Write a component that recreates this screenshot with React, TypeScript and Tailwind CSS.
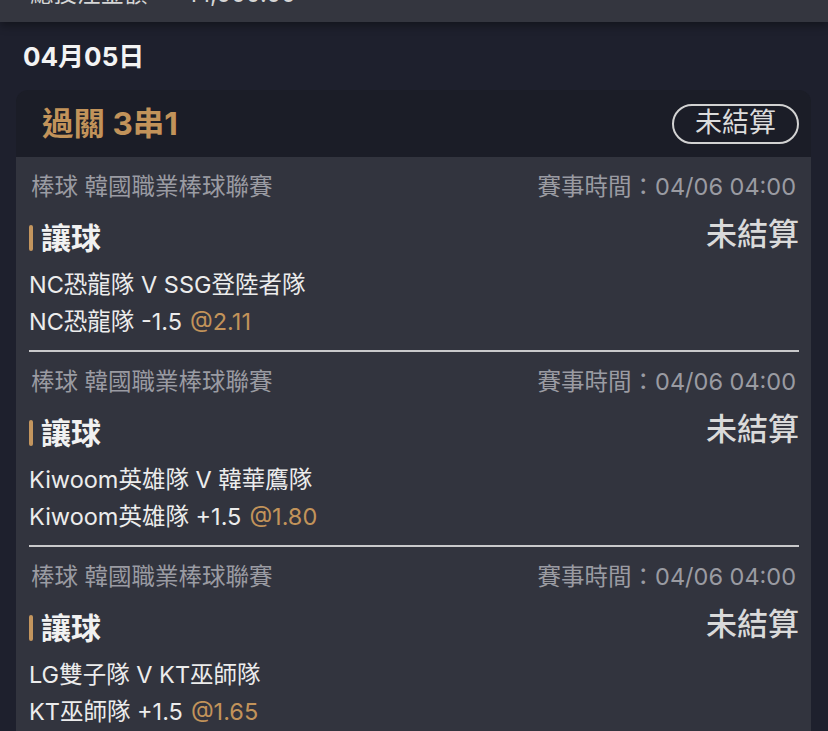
import React from "react";

type Bet = {
  league: string;
  time: string;
  market: string;
  status: string;
  match: string;
  pick: string;
  odds: string;
};

const bets: Bet[] = [
  {
    league: "棒球 韓國職業棒球聯賽",
    time: "賽事時間：04/06 04:00",
    market: "讓球",
    status: "未結算",
    match: "NC恐龍隊 V SSG登陸者隊",
    pick: "NC恐龍隊 -1.5",
    odds: "@2.11",
  },
  {
    league: "棒球 韓國職業棒球聯賽",
    time: "賽事時間：04/06 04:00",
    market: "讓球",
    status: "未結算",
    match: "Kiwoom英雄隊 V 韓華鷹隊",
    pick: "Kiwoom英雄隊 +1.5",
    odds: "@1.80",
  },
  {
    league: "棒球 韓國職業棒球聯賽",
    time: "賽事時間：04/06 04:00",
    market: "讓球",
    status: "未結算",
    match: "LG雙子隊 V KT巫師隊",
    pick: "KT巫師隊 +1.5",
    odds: "@1.65",
  },
];

const BetRow: React.FC<{ bet: Bet; last: boolean }> = ({ bet, last }) => (
  <div className="pt-[15px]">
    {/* league + kickoff */}
    <div className="flex items-center justify-between h-[30px] text-[23.5px] text-[#9a9ba2]">
      <span className="ml-[2px]">{bet.league}</span>
      <span className="mr-[3px]">{bet.time}</span>
    </div>

    {/* market + status */}
    <div className="mt-[16px] flex items-center justify-between h-[40px]">
      <div className="flex items-center">
        <span className="w-[4px] h-[26px] rounded-sm bg-[#c3955e]" />
        <span className="ml-[8px] text-[30px] font-bold text-[#f1f1f1]">{bet.market}</span>
      </div>
      <span className="mb-[8px] text-[31px] font-medium text-[#dadada]">{bet.status}</span>
    </div>

    {/* match info */}
    <div className="mt-[8px] h-[37px] flex items-center text-[23.5px] text-[#ececec]">{bet.match}</div>
    <div className="h-[37px] flex items-center text-[23.5px] text-[#ececec]">
      {bet.pick}
      <span className="ml-[8px] text-[#c2935a]">{bet.odds}</span>
    </div>

    <div className={`mt-[10px] h-[2px] ${last ? "bg-transparent" : "bg-[#c9c9cb]"}`} />
  </div>
);

export default function App() {
  return (
    <div
      className="w-[828px] h-[731px] overflow-hidden bg-[#1e202d]"
      style={{ fontFamily: 'Inter, "Noto Sans CJK TC", sans-serif' }}
    >
      {/* top summary bar, scrolled mostly out of view */}
      <div className="relative z-10 h-[22px] overflow-hidden bg-[#34363f] shadow-[0_4px_8px_rgba(0,0,0,0.35)]">
        <div className="-mt-[24px] flex items-center h-[36px] px-[30px] text-[23.5px] text-[#d6d6d6]">
          <span>總投注金額</span>
          <span className="ml-[40px]">¥1,000.00</span>
        </div>
      </div>

      {/* date */}
      <div className="h-[68px] flex items-center px-[23px] text-[26px] font-bold text-[#f3f3f3]">
        04月05日
      </div>

      {/* parlay card */}
      <div className="ml-[16px] mr-[17px] rounded-t-[12px] overflow-hidden">
        <div className="h-[67px] flex items-center justify-between pl-[26px] pr-[12px] bg-[#1b1d27]">
          <span className="text-[31.5px] font-bold text-[#c2935a]">過關 3串1</span>
          <span className="h-[40px] w-[127px] flex items-center justify-center rounded-full border-2 border-[#d2d2d2] text-[27px] text-[#dcdcdc]">
            未結算
          </span>
        </div>
        <div className="bg-[#32343e] pl-[13px] pr-[12px]">
          {bets.map((b, i) => (
            <BetRow key={i} bet={b} last={i === bets.length - 1} />
          ))}
        </div>
      </div>
    </div>
  );
}
